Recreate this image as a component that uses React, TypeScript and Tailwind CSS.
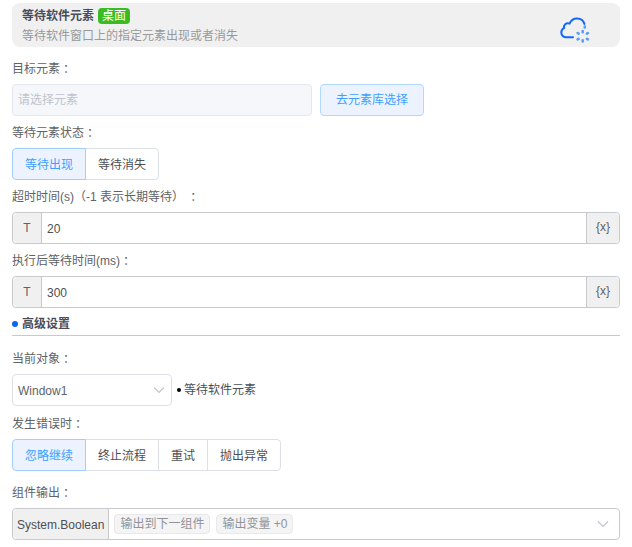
import type { ReactNode } from 'react'

const errorActions = ['忽略继续', '终止流程', '重试', '抛出异常']
const waitStates = ['等待出现', '等待消失']
const outputs = ['输出到下一组件', '输出变量 +0']

function Colon() {
  return <span className="font-['Noto_Sans_CJK_TC',sans-serif]">：</span>
}

function FieldLabel({ htmlFor, id, children }: { htmlFor?: string; id?: string; children: ReactNode }) {
  return (
    <label htmlFor={htmlFor} id={id} className="flex h-8 items-center pt-0.5 whitespace-pre text-[#606266]">
      {children}
      <Colon />
    </label>
  )
}

function Chevron() {
  return (
    <svg
      className="pointer-events-none h-3 w-3 shrink-0"
      viewBox="0 0 12 12"
      fill="none"
      stroke="#c0c4cc"
      strokeWidth="1.1"
    >
      <path d="M1 3.5 6 8.5 11 3.5" />
    </svg>
  )
}

function CloudIcon() {
  return (
    <svg className="h-8 w-8" viewBox="0 0 32 32" fill="none" strokeLinecap="round">
      <path
        d="M13 24.3H6.5C3.4 24.3 1.3 22.3 1.3 19.5C1.3 17.2 2.4 15.6 4.2 14.8C3.4 11.8 6 9.6 9.5 10.6C11 7.2 13.7 5.3 17 5.4C20.8 5.5 23.7 7.6 24.4 11"
        stroke="#1168f8"
        strokeWidth="2"
      />
      <g stroke="#5a9cfb" strokeWidth="2.6">
        <path d="M24.8 13.6v.8M22.7 18v1.2M22.7 27.2v1.2M17.6 20l1 .6M26.9 25.8l1 .6M17.6 26.4l1-.6M26.9 20.6l1-.6" />
      </g>
    </svg>
  )
}

function RadioGroup({ name, labelledBy, options }: { name: string; labelledBy: string; options: string[] }) {
  return (
    <div role="radiogroup" aria-labelledby={labelledBy} className="flex h-8">
      {options.map((option, i) => (
        <label
          key={option}
          className="-ml-px flex cursor-pointer items-center border border-[#dcdfe6] px-3 pt-0.5 text-[#4c4f56] first:ml-0 first:rounded-l last:rounded-r has-checked:z-1 has-checked:border-[#a0cfff] has-checked:bg-[#ecf3ff] has-checked:text-[#409eff]"
        >
          <input type="radio" name={name} value={option} defaultChecked={i === 0} className="sr-only" />
          {option}
        </label>
      ))}
    </div>
  )
}

function ExpressionInput({ id, value }: { id: string; value: string }) {
  return (
    <div className="flex h-8 overflow-hidden rounded border border-[#c8c9cc]">
      <button
        type="button"
        aria-label="文本模式"
        className="w-[29px] shrink-0 border-r border-[#c8c9cc] bg-[#f0f0f0] text-[#606266]"
      >
        T
      </button>
      <input id={id} defaultValue={value} className="min-w-0 flex-1 px-[5px] pt-0.5 text-[#4c4f56] outline-none" />
      <button
        type="button"
        aria-label="插入变量"
        className="w-[33px] shrink-0 border-l border-[#c8c9cc] bg-[#f0f0f0] pb-0.5 text-[#606266]"
      >
        {'{x}'}
      </button>
    </div>
  )
}

export default function App() {
  return (
    <main className="bg-white px-3 pt-[3px] pb-2 font-['Liberation_Sans','Noto_Sans_CJK_SC',sans-serif] text-xs text-[#4c4f56]">
      <header className="flex h-11 items-center justify-between rounded-lg bg-[#f0f0f0] pr-7 pl-[10px]">
        <div className="pt-0.5">
          <div className="flex h-5 items-center gap-1">
            <h1 className="font-bold text-[#4a4d58]">等待软件元素</h1>
            <span className="rounded bg-[#3bbb23] px-1 leading-4 text-white">桌面</span>
          </div>
          <p className="h-5 leading-5 text-[#999]">等待软件窗口上的指定元素出现或者消失</p>
        </div>
        <div className="pt-2">
          <CloudIcon />
        </div>
      </header>

      <div className="pt-[5px]">
        <FieldLabel htmlFor="target">目标元素</FieldLabel>
        <div className="flex gap-2">
          <input
            id="target"
            disabled
            placeholder="请选择元素"
            className="h-8 w-[300px] rounded border border-[#e4e7ed] bg-[#f5f7fa] px-[5px] placeholder:text-[#c0c4cc]"
          />
          <button type="button" className="h-8 rounded border border-[#b3d8ff] bg-[#ecf3ff] px-[15px] text-[#409eff]">
            去元素库选择
          </button>
        </div>
      </div>

      <FieldLabel id="state-label">等待元素状态</FieldLabel>
      <RadioGroup name="state" labelledBy="state-label" options={waitStates} />

      <FieldLabel htmlFor="timeout">超时时间(s)（-1 表示长期等待） </FieldLabel>
      <ExpressionInput id="timeout" value="20" />

      <FieldLabel htmlFor="delay">执行后等待时间(ms)</FieldLabel>
      <ExpressionInput id="delay" value="300" />

      <h2 className="flex h-7 items-center gap-1 border-b border-[#c8c9cc] pt-1 font-bold text-[#4a4d58]">
        <span className="h-1.5 w-1.5 rounded-full bg-[#0a64f5]" />
        高级设置
      </h2>

      <div className="pt-1.5">
        <FieldLabel htmlFor="object">当前对象</FieldLabel>
        <div className="flex items-center gap-[5px]">
          <div className="grid w-40 items-center">
            <select
              id="object"
              className="col-start-1 row-start-1 h-8 appearance-none rounded border border-[#dcdfe6] bg-white px-[5px] pt-0.5 text-[#606266]"
            >
              <option>Window1</option>
            </select>
            <span className="pointer-events-none col-start-1 row-start-1 justify-self-end pr-[7px]">
              <Chevron />
            </span>
          </div>
          <div className="flex items-center gap-[3px]">
            <span className="h-1 w-1 rounded-full bg-black" />
            等待软件元素
          </div>
        </div>
      </div>

      <div className="pt-px">
        <FieldLabel id="error-label">发生错误时</FieldLabel>
        <RadioGroup name="error" labelledBy="error-label" options={errorActions} />
      </div>

      <div className="pt-[5px]">
        <FieldLabel id="output-label">组件输出</FieldLabel>
        <div className="flex h-8 overflow-hidden rounded border border-[#c8c9cc]">
          <span className="flex items-center border-r border-[#c8c9cc] bg-[#f0f0f0] px-1 pt-0.5">System.Boolean</span>
          <button
            type="button"
            aria-labelledby="output-label"
            aria-haspopup="listbox"
            className="flex flex-1 items-center gap-1.5 pr-[10px] pl-[5px]"
          >
            {outputs.map((output) => (
              <span
                key={output}
                className="h-5 rounded border border-[#e9e9eb] bg-[#f4f4f5] px-[5px] leading-[18px] text-[#909399]"
              >
                {output}
              </span>
            ))}
            <span className="ml-auto">
              <Chevron />
            </span>
          </button>
        </div>
      </div>
    </main>
  )
}
